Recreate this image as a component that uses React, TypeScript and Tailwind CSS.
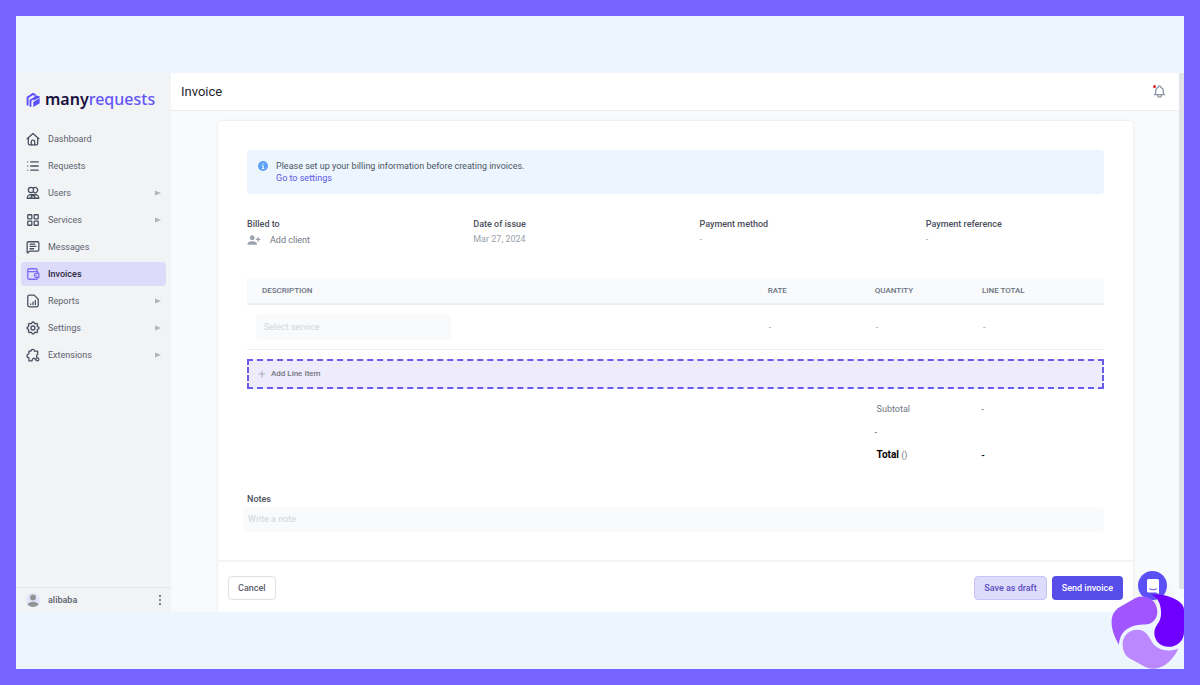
import { ReactNode } from "react";
import { LayoutGrid, List, MessageSquareText, Plus } from "lucide-react";
import { HiOutlineCog, HiOutlineBell } from "react-icons/hi";
import { MdPersonAddAlt1 } from "react-icons/md";

function Icon({ children }: { children: ReactNode }) {
  return (
    <svg
      viewBox="0 0 24 24"
      className="size-[14px]"
      fill="none"
      stroke="currentColor"
      strokeWidth="2.200"
      strokeLinecap="round"
      strokeLinejoin="round"
    >
      {children}
    </svg>
  );
}

const navItems = [
  {
    name: "Dashboard",
    icon: (
      <Icon>
        <path d="M2 11.500 12 2.500l10 9" />
        <path d="M4 10V20a2 2 0 0 0 2 2h12a2 2 0 0 0 2-2V10" />
        <path d="M9 22v-5a3 3 0 0 1 6 0v5" />
      </Icon>
    ),
  },
  {
    name: "Requests",
    icon: <List strokeWidth={2.2} className="size-[14px]" />,
  },
  {
    name: "Users",
    more: true,
    icon: (
      <Icon>
        <circle cx="8.500" cy="7" r="4.500" />
        <path d="M13 3.200a4.500 4.500 0 1 1 0 7.600" />
        <path d="M6 15h12c2.500 1 4 3 4 6H2c0-3 1.500-5 4-6ZM8 15c3 0 7 2 8 6M16 15c-3 0-7 2-8 6" />
      </Icon>
    ),
  },
  {
    name: "Services",
    more: true,
    icon: (
      <LayoutGrid strokeWidth={2.2} className="size-[14px]" />
    ),
  },
  {
    name: "Messages",
    icon: <MessageSquareText strokeWidth={2.2} className="size-[14px]" />,
  },
  {
    name: "Invoices",
    active: true,
    icon: (
      <Icon>
        <path d="M20 11V8H3V19a2 2 0 0 0 2 2h13a2 2 0 0 0 2-2v-1" />
        <path d="M3 8V5a2 2 0 0 1 2-2h12a2 2 0 0 1 2 2v3" />
        <path d="M22 11h-4a3.500 3.500 0 0 0 0 7h4ZM18 14.500h.1" />
      </Icon>
    ),
  },
  {
    name: "Reports",
    more: true,
    icon: (
      <Icon>
        <path d="M14 2H6a3 3 0 0 0-3 3v14a3 3 0 0 0 3 3h12a3 3 0 0 0 3-3V9Z" />
        <path d="M8 18v-1M12 18v-4M16 18v-7" />
      </Icon>
    ),
  },
  {
    name: "Settings",
    more: true,
    icon: <HiOutlineCog className="-ml-px size-4" />,
  },
  {
    name: "Extensions",
    more: true,
    icon: (
      <Icon>
        <path d="M5 5.500h3.500a3 3 0 1 1 6 0H20V11a3 3 0 0 0-1 5M5 5.500V10a3.200 3.200 0 1 0 0 6.500V22h5.500c-.5-5 5-6 5.500-2" />
        <circle cx="19.500" cy="19.500" r="2.500" />
      </Icon>
    ),
  },
];

function Logo() {
  return (
    <a href="#" className="flex items-center gap-[5px] pl-[10px]">
      <svg
        viewBox="76 95 44 47"
        className="h-[15px] w-[14px]"
        fill="none"
        stroke="#5b4ffb"
        strokeWidth="6"
      >
        <path d="M81 137V112L98 101 106 105" />
        <path d="M90 141V121L111 109" />
        <path
          d="M99 142V126L119 114V130ZM104 105 119 108V112L100 122"
          fill="#5b4ffb"
          stroke="none"
        />
      </svg>
      <span className="font-['Noto_Sans',sans-serif] text-[16px] leading-5 font-semibold text-[#17103d]">
        many<span className="font-medium text-[#6356f8]">requests</span>
      </span>
    </a>
  );
}

function Sidebar() {
  return (
    <aside className="flex w-[155px] shrink-0 flex-col bg-[#f2f3f5] pt-4">
      <Logo />
      <nav className="mt-[18px] flex flex-col gap-[3px] px-[5px]">
        {navItems.map((item) => (
          <a
            key={item.name}
            href="#"
            className={
              item.active
                ? "flex h-6 items-center rounded bg-[#dddafa] px-[5px] font-medium text-[#2b2940]"
                : "flex h-6 items-center rounded px-[5px] text-[#5b626e]"
            }
          >
            <span
              className={
                item.active
                  ? "flex w-[22px] text-[#7b6cf3]"
                  : "flex w-[22px] text-[#475061]"
              }
            >
              {item.icon}
            </span>
            {item.name}
            {item.more && (
              <svg
                viewBox="0 0 6 6"
                className="ml-auto size-[6px]"
                fill="#b0b3b9"
              >
                <path d="M0 0.500 6 3 0 5.500Z" />
              </svg>
            )}
          </a>
        ))}
      </nav>
      <div className="mt-auto flex h-[25px] items-center border-t border-[#e5e6e9] px-[9px] font-medium text-[#5b626e]">
        <svg viewBox="0 0 14 14" className="mr-2 ml-px size-[14px]">
          <circle cx="7" cy="7" r="7" fill="#e3e6fb" />
          <circle cx="7" cy="4.500" r="3" fill="#949496" />
          <path
            d="M1.500 11.500C3 7.800 11 7.800 12.500 11.500 10 14.800 4 14.800 1.500 11.500Z"
            fill="#949496"
          />
        </svg>
        alibaba
        <button aria-label="Account menu" className="ml-auto">
          <svg viewBox="0 0 4 12" className="h-3 w-1" fill="#858990">
            <circle cx="2" cy="2" r="1.200" />
            <circle cx="2" cy="6" r="1.200" />
            <circle cx="2" cy="10" r="1.200" />
          </svg>
        </button>
      </div>
    </aside>
  );
}

function Detail({ label, children }: { label: string; children: ReactNode }) {
  return (
    <div>
      <dt className="font-medium text-[#4b4f5c]">{label}</dt>
      <dd className="mt-[3px] text-[#9a9fac]">{children}</dd>
    </div>
  );
}

function InvoiceForm() {
  return (
    <form className="rounded-t bg-white shadow-[0_0_3px_#0000001a]">
      <div className="px-[29px] pt-[29px]">
        <div className="flex h-11 items-start rounded bg-[#edf5ff] px-[11px] pt-[10px]">
          <svg viewBox="0 0 10 10" className="mt-px mr-2 size-[10px]">
            <circle cx="5" cy="5" r="5" fill="#5ea2f8" />
            <path
              d="M5 2.300V3.300M4.200 4.700H5.200V7.500M4 7.500H6.200"
              stroke="#fff"
              fill="none"
            />
          </svg>
          <p className="text-[#4b5563]">
            Please set up your billing information before creating invoices.
            <br />
            <a href="#" className="text-[#5a55e6]">
              Go to settings
            </a>
          </p>
        </div>

        <dl className="mt-6 grid grid-cols-4 gap-x-12">
          <Detail label="Billed to">
            <button
              type="button"
              className="flex items-center gap-[9px] text-[#727885]"
            >
              <MdPersonAddAlt1 className="size-[14px] text-[#9ca3af]" />
              Add client
            </button>
          </Detail>
          <Detail label="Date of issue">Mar 27, 2024</Detail>
          <Detail label="Payment method">-</Detail>
          <Detail label="Payment reference">-</Detail>
        </dl>

        <table className="mt-[31px] w-full table-fixed text-left">
          <thead>
            <tr className="h-[26px] border-b-2 border-[#eceff1] bg-[#f8fafc] text-[8px] text-[#6b7280]">
              <th className="w-[59%] pl-[15px] font-medium">DESCRIPTION</th>
              <th className="w-[12.5%] pl-[15px] font-medium">RATE</th>
              <th className="w-[12.5%] pl-[15px] font-medium">QUANTITY</th>
              <th className="w-[16%] pl-[15px] font-medium">LINE TOTAL</th>
            </tr>
          </thead>
          <tbody>
            <tr className="h-[45px] border-b border-[#edeff1] text-[#9a9fac]">
              <td className="pl-[9px]">
                <select
                  aria-label="Service"
                  className="block h-[26px] w-[195px] appearance-none rounded bg-[#f8fafc] px-2 text-[#d0d4da]"
                >
                  <option>Select service</option>
                </select>
              </td>
              <td className="pl-4">-</td>
              <td className="pl-4">-</td>
              <td className="pl-4">-</td>
            </tr>
          </tbody>
        </table>

        <button
          type="button"
          className="mt-[9px] flex h-[30px] w-full items-center gap-1 border-2 border-dashed border-[#6a5cea] bg-[#edebfc] px-2 text-[8px] font-medium text-[#75757f]"
        >
          <Plus className="size-[10px] text-[#9ca3af]" />
          Add Line Item
        </button>

        <div className="mt-[14px] ml-[73%] grid grid-cols-[47%_53%] gap-y-[11px] text-[#4b5563]">
          <span className="pl-1 text-[#727885]">Subtotal</span>
          <span>-</span>
          <span className="col-span-2 pl-[2px]">-</span>
          <span className="pl-1 text-[#727885]">
            <b className="text-[10px] font-bold text-black">Total</b> ()
          </span>
          <b className="text-black">-</b>
        </div>

        <label
          htmlFor="notes"
          className="mt-8 block font-medium text-[#4b4f5c]"
        >
          Notes
        </label>
        <div className="-ml-1 pt-[2px]">
          <input
            id="notes"
            type="text"
            placeholder="Write a note"
            className="block h-[25px] w-full rounded bg-[#f8fafc] px-[5px] placeholder:text-[#d0d4da]"
          />
        </div>
      </div>

      <div className="mt-7 flex items-center gap-[5px] border-t-2 border-[#f3f4f6] px-[10px] pt-[14px] pb-3 font-medium">
        <button
          type="button"
          className="mr-auto h-6 rounded border border-[#dfe1e8] px-[9px] text-[#5b5f6c]"
        >
          Cancel
        </button>
        <button
          type="button"
          className="h-6 rounded border border-[#c9c2f8] bg-[#dddafa] px-[9px] text-[#5a4fc0]"
        >
          Save as draft
        </button>
        <button
          type="submit"
          className="h-6 rounded bg-[#574eea] px-[10px] text-white"
        >
          Send invoice
        </button>
      </div>
    </form>
  );
}

function BrandMark() {
  return (
    <svg
      viewBox="213 148 219 224"
      className="absolute right-0 bottom-0 h-[75px] w-[73px]"
    >
      <path
        d="M237 300C224 278 213 252 215 226C217 204 229 192 242 185L288 159C320 145 352 168 352 200C352 225 335 239 315 239C280 239 240 250 237 300Z"
        fill="#a055ff"
      />
      <path
        d="M333 150C370 146 400 158 418 171C428 179 432 187 432 195V262C432 288 411 306 386 306C361 306 343 288 343 264C343 240 362 236 363 208C364 178 354 158 333 150Z"
        fill="#6f00ff"
      />
      <path
        d="M415 311C400 345 370 372 338 372C325 372 317 367 308 362L268 340C254 331 248 316 248 298C248 272 268 255 292 255C313 255 324 269 332 285C347 315 380 325 415 311Z"
        fill="#bb88ff"
      />
    </svg>
  );
}

export default function App() {
  return (
    <div className="relative flex min-h-screen flex-col border-16 border-[#7564ff] bg-[#edf5ff] py-[57px] font-[Roboto,sans-serif] text-[9px] leading-3">
      <div className="relative flex flex-1 bg-[#f8fafc]">
        <Sidebar />
        <main className="min-w-0 flex-1 overflow-hidden">
          <header className="flex h-[38px] items-center justify-between border-b border-[#eaecef] bg-white pr-3 pl-[10px]">
            <h1 className="text-[13px] leading-4 text-[#1f2430]">Invoice</h1>
            <button aria-label="Notifications" className="relative">
              <HiOutlineBell className="size-[15px] text-[#8e95a5]" />
              <span className="absolute top-px left-px size-[3px] rounded-full bg-[#e5202a]" />
            </button>
          </header>
          <div className="pt-[10px] pr-[46px] pl-[47px]">
            <InvoiceForm />
          </div>
        </main>
        <div className="w-[5px] pb-[23px]">
          <div className="h-full bg-[#e0e2e6]" />
        </div>
        <button
          aria-label="Open chat"
          className="absolute right-[17px] bottom-3 flex size-[29px] items-center justify-center rounded-full bg-[#5b50f5] shadow-lg"
        >
          <svg viewBox="0 0 14 16" className="h-4 w-[14px]">
            <path
              d="M2.500 1H11.500A1.500 1.500 0 0 1 13 2.500V16L10 14.500H2.500A1.500 1.500 0 0 1 1 13V2.500A1.500 1.500 0 0 1 2.500 1Z"
              fill="#fff"
            />
            <path
              d="M3 10.500C5 12.300 9 12.300 11 10.500"
              fill="none"
              stroke="#5b50f5"
            />
          </svg>
        </button>
      </div>
      <BrandMark />
    </div>
  );
}
